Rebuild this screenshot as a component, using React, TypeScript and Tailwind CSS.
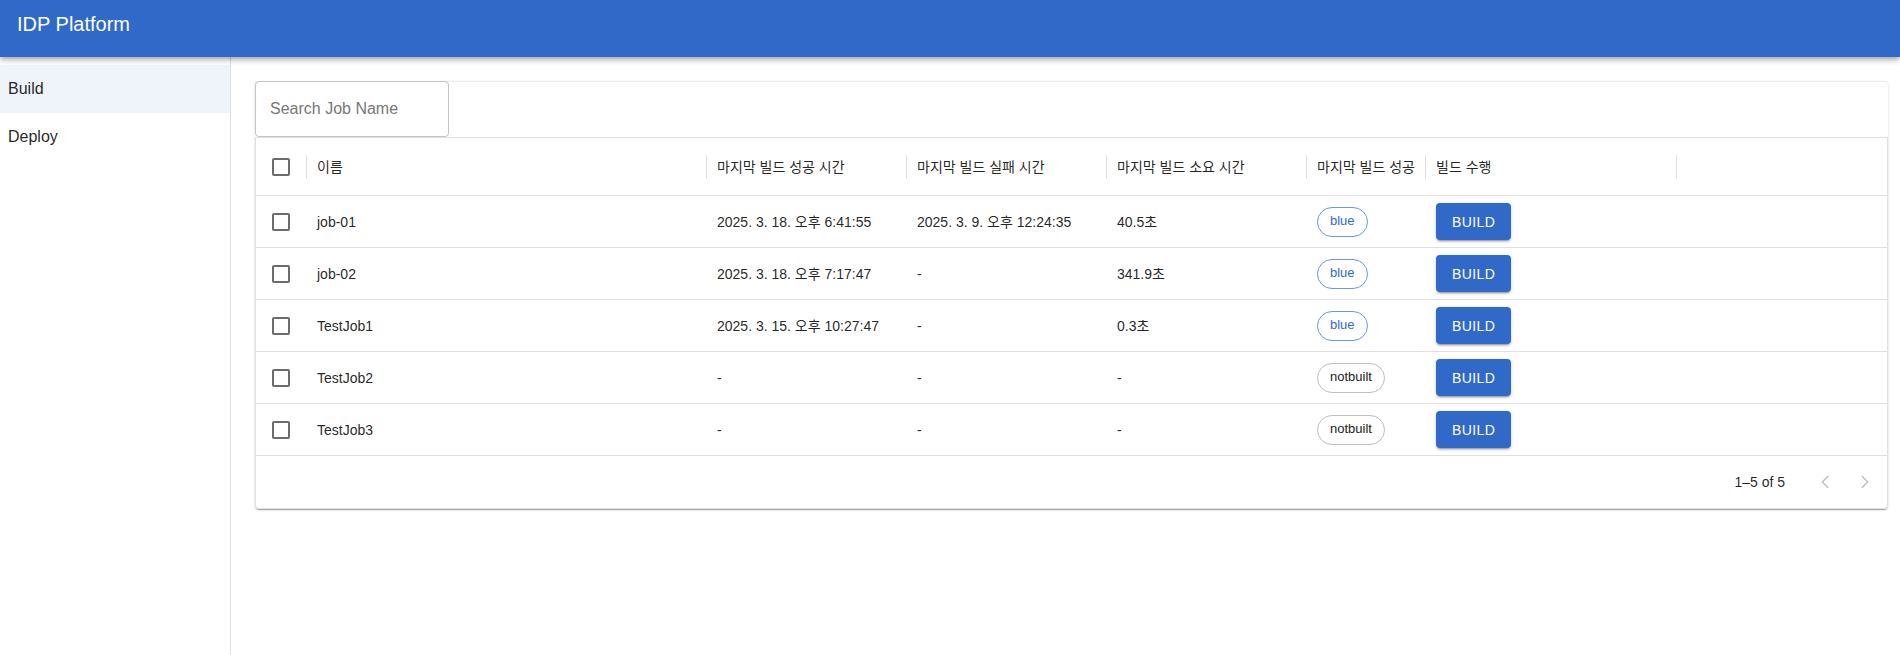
import { ChevronLeft, ChevronRight } from 'lucide-react';

const jobs = [
  { name: 'job-01', success: '2025. 3. 18. 오후 6:41:55', fail: '2025. 3. 9. 오후 12:24:35', duration: '40.5초', status: 'blue' },
  { name: 'job-02', success: '2025. 3. 18. 오후 7:17:47', fail: '-', duration: '341.9초', status: 'blue' },
  { name: 'TestJob1', success: '2025. 3. 15. 오후 10:27:47', fail: '-', duration: '0.3초', status: 'blue' },
  { name: 'TestJob2', success: '-', fail: '-', duration: '-', status: 'notbuilt' },
  { name: 'TestJob3', success: '-', fail: '-', duration: '-', status: 'notbuilt' },
];

const columns = [
  { label: '이름', width: 'w-[400px]' },
  { label: '마지막 빌드 성공 시간', width: 'w-[200px]' },
  { label: '마지막 빌드 실패 시간', width: 'w-[200px]' },
  { label: '마지막 빌드 소요 시간', width: 'w-[200px]' },
  { label: '마지막 빌드 성공', width: 'w-[119px]' },
  { label: '빌드 수행', width: 'w-[251px]' },
];

function Checkbox() {
  return <div className="w-[18px] h-[18px] rounded-[2px] border-2 border-[#6b6b6b] bg-white" />;
}

function Separator() {
  return <div className="w-px h-6 bg-[#e0e0e0]" />;
}

function StatusChip({ status }: { status: string }) {
  const blue = status === 'blue';
  return (
    <span
      className={
        blue
          ? 'inline-flex items-center h-[30px] px-3 rounded-full border border-[#6e96dc] text-[#3169c9] text-[13px]'
          : 'inline-flex items-center h-[30px] px-3 rounded-full border border-[#bdbdbd] text-[#222] text-[13px]'
      }
    >
      {status}
    </span>
  );
}

export default function App() {
  return (
    <div className="min-h-[655px] bg-white text-[rgba(0,0,0,0.87)] font-['Liberation_Sans','Noto_Sans_CJK_KR',sans-serif]">
      <header className="relative z-10 h-[57px] bg-[#3169c9] text-white px-[17px] pt-[8px] shadow-[0_2px_4px_-1px_rgba(0,0,0,0.2),0_4px_5px_0_rgba(0,0,0,0.14),0_1px_10px_0_rgba(0,0,0,0.12)]">
        <h1 className="text-[20px] leading-[32px]">IDP Platform</h1>
      </header>

      <div className="flex">
        <aside className="w-[231px] min-h-[598px] border-r border-[#e0e0e0] pt-2">
          <div className="h-12 flex items-center pl-2 text-base bg-[#eff3fa]">Build</div>
          <div className="h-12 flex items-center pl-2 text-base">Deploy</div>
        </aside>

        <main className="flex-1 pl-6 pr-3 pt-6">
          <div className="rounded bg-white shadow-[0_2px_1px_-1px_rgba(0,0,0,0.2),0_1px_1px_0_rgba(0,0,0,0.14),0_1px_3px_0_rgba(0,0,0,0.12)] border-t border-[#ececec]">
            <div className="flex">
              <div className="w-[194px] h-[56px] -mt-px rounded border border-[#c4c4c4] flex items-center px-[14px] text-base text-[#777]">
                Search Job Name
              </div>
            </div>

            <div className="border border-[#e0e0e0] rounded-b text-sm">
              <div className="flex items-center h-[58px] border-b border-[#e0e0e0]">
                <div className="w-[50px] flex items-center justify-center">
                  <Checkbox />
                </div>
                {columns.map((c) => (
                  <div key={c.label} className={`${c.width} flex items-center`}>
                    <Separator />
                    <span className="pl-[10px]">{c.label}</span>
                  </div>
                ))}
                <Separator />
              </div>

              {jobs.map((job) => (
                <div key={job.name} className="flex items-center h-[52px] border-b border-[#e0e0e0]">
                  <div className="w-[50px] flex items-center justify-center">
                    <Checkbox />
                  </div>
                  <div className="w-[400px] pl-[11px]">{job.name}</div>
                  <div className="w-[200px] pl-[11px]">{job.success}</div>
                  <div className="w-[200px] pl-[11px]">{job.fail}</div>
                  <div className="w-[200px] pl-[11px]">{job.duration}</div>
                  <div className="w-[119px] pl-[11px]">
                    <StatusChip status={job.status} />
                  </div>
                  <div className="w-[251px] pl-[11px]">
                    <button className="h-[37px] px-4 rounded bg-[#3169c9] text-white text-sm font-medium tracking-[0.4px] uppercase shadow-[0_3px_1px_-2px_rgba(0,0,0,0.2),0_2px_2px_0_rgba(0,0,0,0.14),0_1px_5px_0_rgba(0,0,0,0.12)]">
                      Build
                    </button>
                  </div>
                </div>
              ))}

              <div className="flex items-center justify-end h-[52px] pr-[2px]">
                <span className="text-sm mr-[20px]">1–5 of 5</span>
                <div className="w-10 h-10 flex items-center justify-center text-[#bdbdbd]">
                  <ChevronLeft size={22} strokeWidth={1.5} />
                </div>
                <div className="w-10 h-10 flex items-center justify-center text-[#bdbdbd]">
                  <ChevronRight size={22} strokeWidth={1.5} />
                </div>
              </div>
            </div>
          </div>
        </main>
      </div>
    </div>
  );
}
